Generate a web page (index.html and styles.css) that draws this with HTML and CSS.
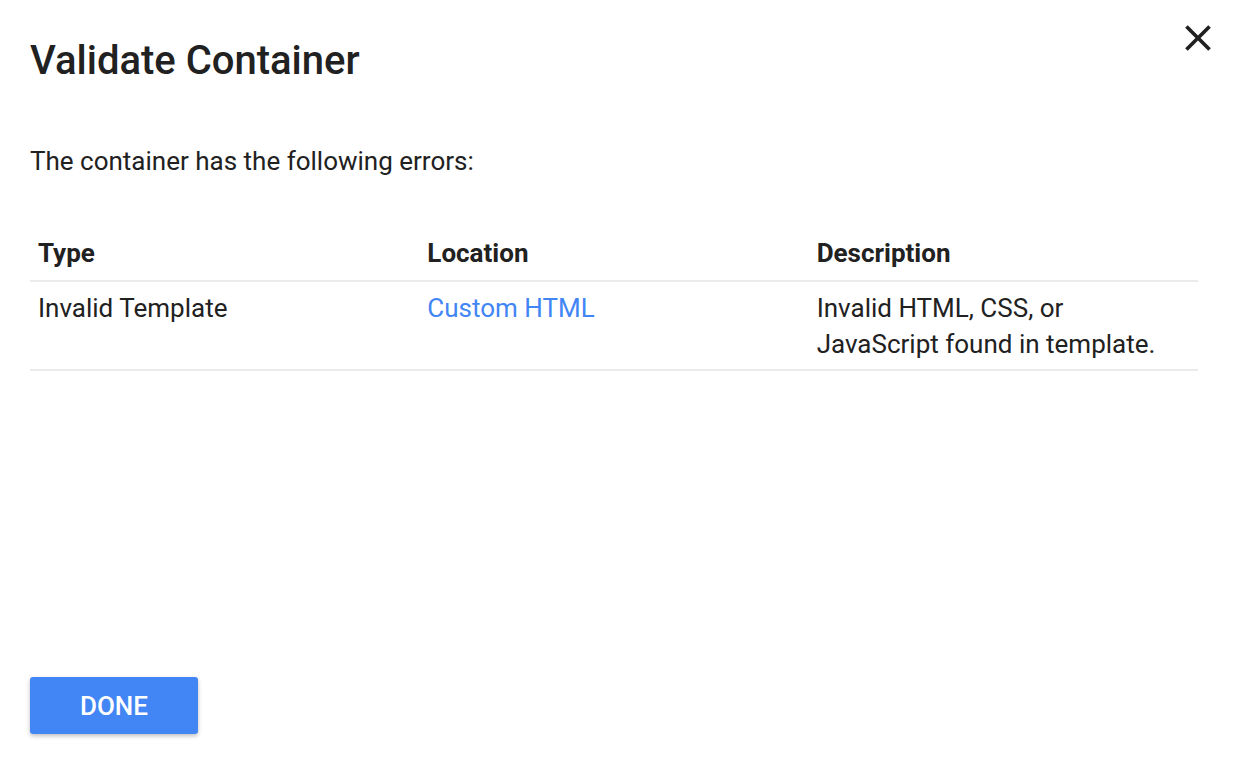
FILE: index.html
```html
<!DOCTYPE html>
<html>
<head>
<meta charset="utf-8">
<link rel="stylesheet" href="styles.css">
</head>
<body>
<div class="dialog">
  <header class="head">
    <h1 class="title">Validate Container</h1>
    <button class="close" aria-label="Close">
      <svg viewBox="0 0 24 24" width="44" height="44"><path d="M19 6.41L17.59 5 12 10.59 6.41 5 5 6.41 10.59 12 5 17.59 6.41 19 12 13.41 17.59 19 19 17.59 13.41 12z" fill="#202020"/></svg>
    </button>
  </header>
  <p class="intro">The container has the following errors:</p>
  <table class="errors">
    <thead>
      <tr><th>Type</th><th>Location</th><th>Description</th></tr>
    </thead>
    <tbody>
      <tr>
        <td>Invalid Template</td>
        <td><a class="link" href="#">Custom HTML</a></td>
        <td>Invalid HTML, CSS, or<br>JavaScript found in template.</td>
      </tr>
    </tbody>
  </table>
  <div class="spacer"></div>
  <footer class="foot">
    <button class="done">DONE</button>
  </footer>
</div>
</body>
</html>
```
FILE: styles.css
```css
html, body {
  margin: 0;
  padding: 0;
  background: #fff;
}
body {
  font-family: Roboto, "Liberation Sans", sans-serif;
  color: #212121;
}
.dialog {
  width: 1236px;
  height: 762px;
  box-sizing: border-box;
  padding: 0 38px 28px 30px;
  display: flex;
  flex-direction: column;
}
.head {
  display: flex;
  justify-content: space-between;
  align-items: flex-start;
  height: 120px;
}
.title {
  margin: 37px 0 0 0;
  font-size: 40px;
  font-weight: 500;
  line-height: 48px;
}
.close {
  margin: 16px -22px 0 0;
  padding: 0;
  border: 0;
  background: none;
  width: 44px;
  height: 44px;
  cursor: pointer;
}
.close svg { display: block; }
.intro {
  margin: 23px 0 0 0;
  font-size: 26px;
  line-height: 36px;
}
.errors {
  margin-top: 56px;
  width: 1168px;
  border-collapse: collapse;
  table-layout: fixed;
  font-size: 26px;
}
.errors th {
  text-align: left;
  font-weight: 700;
  padding: 0 8px 9px;
  line-height: 36px;
  border-bottom: 2px solid #ebebeb;
}
.errors td {
  vertical-align: top;
  padding: 8px 8px 7px;
  line-height: 36px;
  border-bottom: 2px solid #ebebeb;
}
.link {
  color: #4285f4;
  text-decoration: none;
}
.spacer { flex: 1; }
.foot { display: flex; }
.done {
  width: 168px;
  height: 57px;
  border: 0;
  border-radius: 3px;
  background: #4285f4;
  color: #fff;
  font-family: Roboto, "Liberation Sans", sans-serif;
  font-size: 26px;
  font-weight: 500;
  box-shadow: 0 2px 4px rgba(0,0,0,0.25);
  cursor: pointer;
}
```
